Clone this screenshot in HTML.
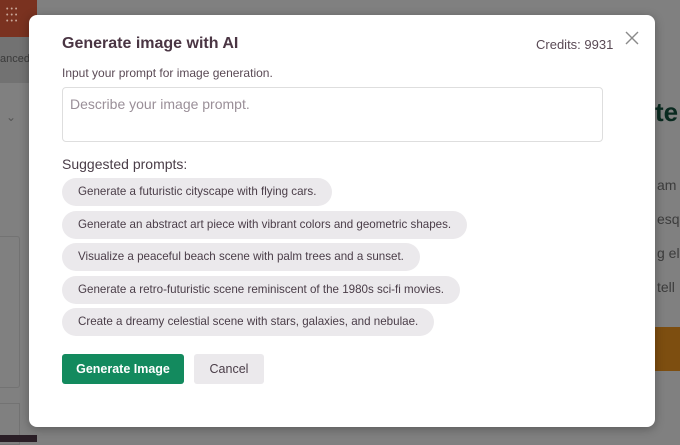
<!DOCTYPE html>
<html><head><style>
html,body{margin:0;width:680px;height:442px;background:#808080}
body{font-family:"Liberation Sans",sans-serif;position:relative;overflow:hidden}
.abs{position:absolute}
.m{left:29px;top:15px;width:626px;height:412px;background:#fff;border-radius:8px;box-shadow:0 2px 10px rgba(0,0,0,.3)}
.pill{position:absolute;left:62px;height:28px;line-height:28px;background:#ebe9ec;border-radius:14px;padding:0 16px;font-size:11.6px;color:#4a3d48;white-space:nowrap}
</style></head><body>
<div class="abs" style="left:0;top:0;width:680px;height:442px;background:rgb(128,128,128)"></div>
<div class="abs" style="left:0;top:0;width:37px;height:37px;background:rgb(122,50,32)"></div>
<div class="abs" style="left:6px;top:7px;color:#c9a89a;font-size:7px;line-height:6px;letter-spacing:2px">•••<br>•••<br>•••</div>
<div class="abs" style="left:0;top:37px;width:29px;height:46px;background:#727272"></div>
<div class="abs" style="left:0;top:53px;font-size:11px;color:#3a3a3a">anced</div>
<div class="abs" style="left:6px;top:110px;font-size:12px;color:#555">⌄</div>
<div class="abs" style="left:0;top:236px;width:19px;height:150px;border:1px solid #737373;border-left:none;border-radius:0 3px 3px 0"></div>
<div class="abs" style="left:0;top:403px;width:19px;height:40px;border:1px solid #737373;border-left:none"></div>
<div class="abs" style="left:0;top:435px;width:37px;height:7px;background:#2a1e26"></div>
<div class="abs" style="left:655px;top:97px;font-size:26px;font-weight:bold;color:#0a2a20">te</div>
<div class="abs" style="left:657px;top:168px;font-size:14px;color:#3c3c3c;line-height:34px;white-space:nowrap">am<br>esq<br>g eli<br>tell</div>
<div class="abs" style="left:655px;top:327px;width:25px;height:44px;background:#7d4e10"></div>
<div class="abs m"></div>
<div class="abs" style="left:62px;top:35px;font-size:16px;font-weight:bold;color:#4a3543">Generate image with AI</div>
<div class="abs" style="left:536px;top:37px;font-size:13px;color:#5a4a55">Credits: 9931</div>
<svg class="abs" style="left:625px;top:31px" width="14" height="14"><path d="M1 1L13 13M13 1L1 13" stroke="#8a8a8a" stroke-width="1.4"/></svg>
<div class="abs" style="left:62px;top:66px;font-size:12px;color:#5a4a55">Input your prompt for image generation.</div>
<div class="abs" style="left:62px;top:87px;width:539px;height:53px;border:1px solid #dedede;border-radius:4px"></div>
<div class="abs" style="left:70px;top:96px;font-size:14px;color:#9a8f98">Describe your image prompt.</div>
<div class="abs" style="left:62px;top:156px;font-size:14px;color:#4a3d48">Suggested prompts:</div>
<div class="pill" style="top:178px">Generate a futuristic cityscape with flying cars.</div>
<div class="pill" style="top:211px">Generate an abstract art piece with vibrant colors and geometric shapes.</div>
<div class="pill" style="top:243px">Visualize a peaceful beach scene with palm trees and a sunset.</div>
<div class="pill" style="top:276px">Generate a retro-futuristic scene reminiscent of the 1980s sci-fi movies.</div>
<div class="pill" style="top:308px">Create a dreamy celestial scene with stars, galaxies, and nebulae.</div>
<div class="abs" style="left:62px;top:354px;width:122px;height:30px;background:#138a5e;border-radius:3px;color:#fff;font-size:12.5px;font-weight:bold;text-align:center;line-height:30px">Generate Image</div>
<div class="abs" style="left:194px;top:354px;width:70px;height:30px;background:#ebe9ec;border-radius:3px;color:#4a3d48;font-size:12.5px;text-align:center;line-height:30px">Cancel</div>
</body></html>
